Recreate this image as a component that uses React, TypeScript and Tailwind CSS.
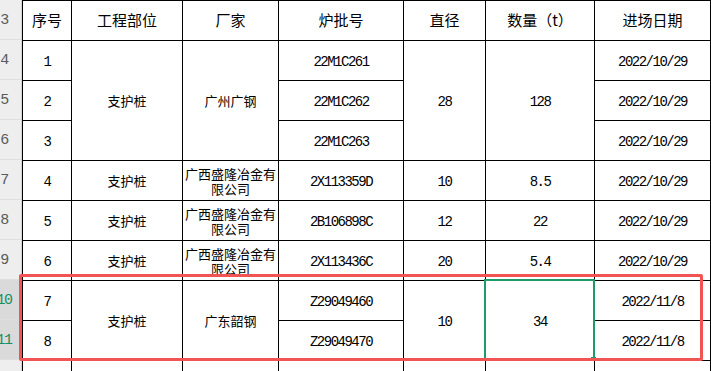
import clsx from 'clsx';
import type { ReactNode } from 'react';

// 表头
const heads = ['序号', '工程部位', '厂家', '炉批号', '直径', '数量（t）', '进场日期'];

type CellProps = {
  children?: ReactNode;
  mono?: boolean; // 数字/编号 用等宽字体
  span?: 2 | 3;
};

function Cell({ children, mono, span }: CellProps) {
  return (
    <div
      className={clsx(
        'bg-white flex items-center justify-center text-center leading-[15px] text-black overflow-hidden',
        mono
          ? "font-['Liberation_Mono','Noto_Sans_CJK_SC',monospace] text-[14px] tracking-[-1.5px] pt-[3px]"
          : "font-['Noto_Sans_CJK_SC',sans-serif] text-[13px] px-px",
        span === 2 && 'row-span-2',
        span === 3 && 'row-span-3'
      )}
    >
      {children}
    </div>
  );
}

const rowNums = [3, 4, 5, 6, 7, 8, 9, 10, 11, 12];

export default function App() {
  return (
    <div className="relative flex h-[371px] w-[711px] overflow-hidden bg-white">
      {/* 行号 */}
      <div className="flex w-[22px] shrink-0 flex-col border-r border-[#d4d4d4]">
        {rowNums.map((n) => (
          <div
            key={n}
            className={clsx(
              'flex h-[40px] shrink-0 items-center border-b border-[#dedede] pt-[3px]',
              n === 10 || n === 11 ? 'bg-[#dadada] text-[#1a8f5e]' : 'bg-[#eeeeee] text-[#5a5a5a]'
            )}
          >
            <div className="flex w-[8px] justify-center font-['Liberation_Mono',monospace] text-[15px] tracking-[-1.5px]">
              {n}
            </div>
          </div>
        ))}
      </div>

      {/* 表格 */}
      <div className="grid h-fit grid-cols-[48px_110px_95px_124px_81px_108px_115px] auto-rows-[39px] gap-px bg-black p-px">
        {heads.map((h) => (
          <div
            key={h}
            className="flex items-center justify-center bg-white font-['Noto_Sans_CJK_SC',sans-serif] text-[15px] text-black"
          >
            {h}
          </div>
        ))}

        <Cell mono>1</Cell>
        <Cell span={3}>支护桩</Cell>
        <Cell span={3}>广州广钢</Cell>
        <Cell mono>22M1C261</Cell>
        <Cell mono span={3}>28</Cell>
        <Cell mono span={3}>128</Cell>
        <Cell mono>2022/10/29</Cell>
        <Cell mono>2</Cell>
        <Cell mono>22M1C262</Cell>
        <Cell mono>2022/10/29</Cell>
        <Cell mono>3</Cell>
        <Cell mono>22M1C263</Cell>
        <Cell mono>2022/10/29</Cell>

        <Cell mono>4</Cell>
        <Cell>支护桩</Cell>
        <Cell>广西盛隆冶金有限公司</Cell>
        <Cell mono>2X113359D</Cell>
        <Cell mono>10</Cell>
        <Cell mono>8.5</Cell>
        <Cell mono>2022/10/29</Cell>

        <Cell mono>5</Cell>
        <Cell>支护桩</Cell>
        <Cell>广西盛隆冶金有限公司</Cell>
        <Cell mono>2B106898C</Cell>
        <Cell mono>12</Cell>
        <Cell mono>22</Cell>
        <Cell mono>2022/10/29</Cell>

        <Cell mono>6</Cell>
        <Cell>支护桩</Cell>
        <Cell>广西盛隆冶金有限公司</Cell>
        <Cell mono>2X113436C</Cell>
        <Cell mono>20</Cell>
        <Cell mono>5.4</Cell>
        <Cell mono>2022/10/29</Cell>

        <Cell mono>7</Cell>
        <Cell span={2}>支护桩</Cell>
        <Cell span={2}>广东韶钢</Cell>
        <Cell mono>Z29049460</Cell>
        <Cell mono span={2}>10</Cell>
        <Cell mono span={2}>34</Cell>
        <Cell mono>2022/11/8</Cell>
        <Cell mono>8</Cell>
        <Cell mono>Z29049470</Cell>
        <Cell mono>2022/11/8</Cell>

        {/* 12행 (잘림) */}
        <Cell />
        <Cell />
        <Cell />
        <Cell />
        <Cell />
        <Cell />
        <Cell />
      </div>

      {/* 选中单元格 */}
      <div className="absolute left-[484px] top-[279px] h-[81px] w-[111px] border-2 border-[#1d9b69]">
        <div className="absolute -bottom-[2px] -right-[3px] h-[3px] w-[5px] bg-[#1d9b69]" />
      </div>

      {/* 红框标注 */}
      <div className="absolute left-[19px] top-[274px] h-[87px] w-[684px] rounded-[2px] border-[3px] border-[#f25454]" />
    </div>
  );
}
